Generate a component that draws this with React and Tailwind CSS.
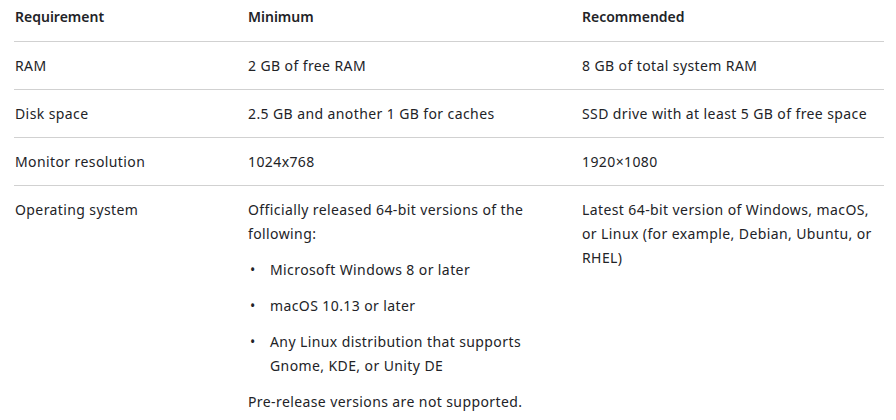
const rows = [
  ["RAM", "2 GB of free RAM", "8 GB of total system RAM"],
  ["Disk space", "2.5 GB and another 1 GB for caches", "SSD drive with at least 5 GB of free space"],
  ["Monitor resolution", "1024x768", "1920×1080"],
];

export default function App() {
  return (
    <div className="w-[896px] h-[420px] overflow-hidden bg-white pl-[14px] pr-[12px] text-[14px] leading-6 text-[#222327] font-['Noto_Sans',sans-serif]">
      <table className="w-[870px] table-fixed border-collapse">
        <colgroup>
          <col className="w-[234px]" />
          <col className="w-[334px]" />
          <col className="w-[302px]" />
        </colgroup>
        <thead>
          <tr className="border-b border-[#d1d1d1] text-left">
            <th className="pl-px pt-[5px] pb-3 font-semibold">Requirement</th>
            <th className="pt-[5px] pb-3 font-semibold">Minimum</th>
            <th className="pt-[5px] pb-3 font-semibold">Recommended</th>
          </tr>
        </thead>
        <tbody className="tracking-[0.4px]">
          {rows.map((r) => (
            <tr key={r[0]} className="border-b border-[#d1d1d1]">
              <td className="pl-px pt-3 pb-[11px] align-top">{r[0]}</td>
              <td className="pt-3 pb-[11px] pr-4 align-top">{r[1]}</td>
              <td className="pt-3 pb-[11px] align-top">{r[2]}</td>
            </tr>
          ))}
          <tr>
            <td className="pl-px py-3 align-top">Operating system</td>
            <td className="py-3 pr-4 align-top">
              <p className="w-[296px]">Officially released 64-bit versions of the following:</p>
              <ul className="mt-3 flex flex-col gap-3">
                <li className="flex">
                  <span className="w-[22px] pl-[2px]">•</span>
                  <span>Microsoft Windows 8 or later</span>
                </li>
                <li className="flex">
                  <span className="w-[22px] pl-[2px]">•</span>
                  <span>macOS 10.13 or later</span>
                </li>
                <li className="flex">
                  <span className="w-[22px] shrink-0 pl-[2px]">•</span>
                  <span className="w-[264px]">Any Linux distribution that supports Gnome, KDE, or Unity DE</span>
                </li>
              </ul>
              <p className="mt-3">Pre-release versions are not supported.</p>
            </td>
            <td className="py-3 align-top">
              <p className="w-[296px]">Latest 64-bit version of Windows, macOS, or Linux (for example, Debian, Ubuntu, or RHEL)</p>
            </td>
          </tr>
        </tbody>
      </table>
    </div>
  );
}
